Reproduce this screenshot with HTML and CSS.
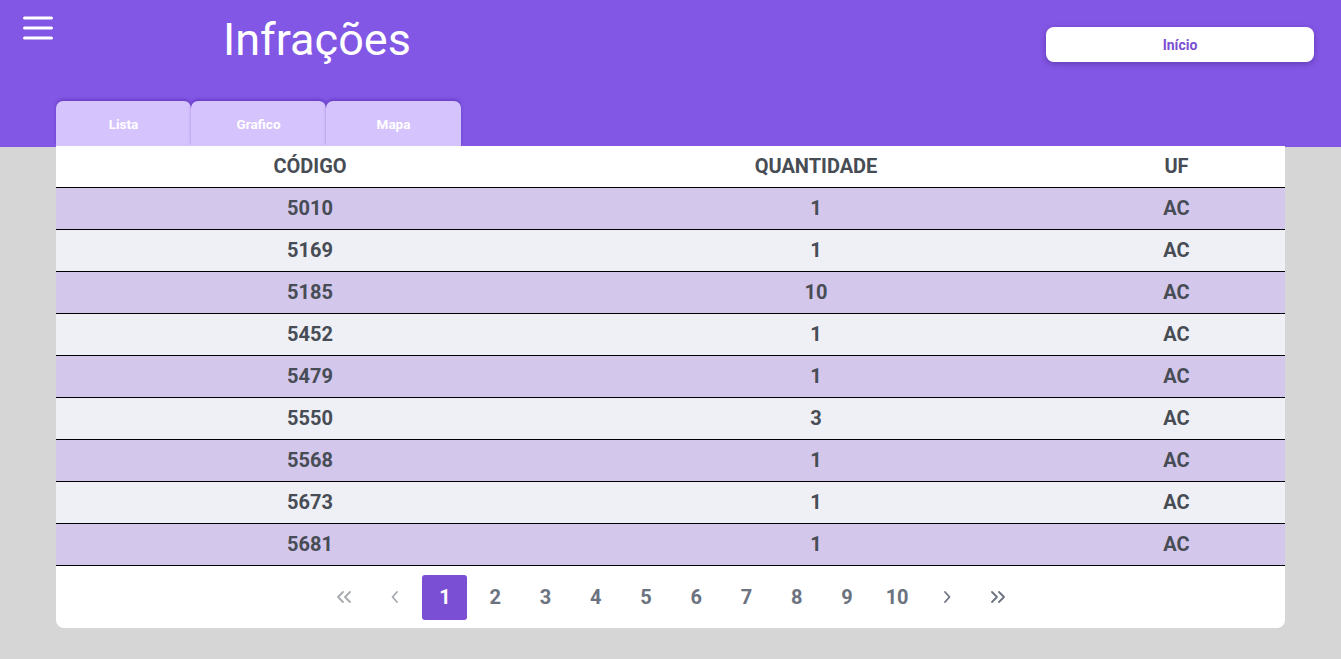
FILE: index.html
```html
<!DOCTYPE html>
<html lang="pt-BR">
<head>
<meta charset="utf-8">
<title>Infrações</title>
<link rel="stylesheet" href="styles.css">
</head>
<body>
<header class="header">
  <div class="topbar">
    <button class="menu" aria-label="menu">
      <svg width="30" height="24" viewBox="0 0 30 24"><g stroke="#fff" stroke-width="3" stroke-linecap="round"><line x1="1.5" y1="2" x2="28.5" y2="2"/><line x1="1.5" y1="12" x2="28.5" y2="12"/><line x1="1.5" y1="22" x2="28.5" y2="22"/></g></svg>
    </button>
    <h1 class="title">Infrações</h1>
    <button class="home">Início</button>
  </div>
  <nav class="tabs">
    <div class="tab">Lista</div>
    <div class="tab">Grafico</div>
    <div class="tab">Mapa</div>
  </nav>
</header>
<main class="main">
  <section class="card">
    <table class="table">
      <colgroup><col class="c1"><col class="c2"><col class="c3"></colgroup>
      <thead><tr><th>CÓDIGO</th><th>QUANTIDADE</th><th>UF</th></tr></thead>
      <tbody>
        <tr><td>5010</td><td>1</td><td>AC</td></tr>
        <tr><td>5169</td><td>1</td><td>AC</td></tr>
        <tr><td>5185</td><td>10</td><td>AC</td></tr>
        <tr><td>5452</td><td>1</td><td>AC</td></tr>
        <tr><td>5479</td><td>1</td><td>AC</td></tr>
        <tr><td>5550</td><td>3</td><td>AC</td></tr>
        <tr><td>5568</td><td>1</td><td>AC</td></tr>
        <tr><td>5673</td><td>1</td><td>AC</td></tr>
        <tr><td>5681</td><td>1</td><td>AC</td></tr>
      </tbody>
    </table>
    <div class="pager">
      <span class="pg disabled"><svg width="18" height="14" viewBox="0 0 18 14"><g fill="none" stroke="currentColor" stroke-width="1.8" stroke-linecap="round" stroke-linejoin="round"><polyline points="8,2 3,7 8,12"/><polyline points="15,2 10,7 15,12"/></g></svg></span>
      <span class="pg disabled"><svg width="10" height="14" viewBox="0 0 10 14"><polyline points="7,2 2.5,7 7,12" fill="none" stroke="currentColor" stroke-width="1.8" stroke-linecap="round" stroke-linejoin="round"/></svg></span>
      <span class="pg active">1</span>
      <span class="pg">2</span>
      <span class="pg">3</span>
      <span class="pg">4</span>
      <span class="pg">5</span>
      <span class="pg">6</span>
      <span class="pg">7</span>
      <span class="pg">8</span>
      <span class="pg">9</span>
      <span class="pg">10</span>
      <span class="pg"><svg width="10" height="14" viewBox="0 0 10 14"><polyline points="3,2 7.5,7 3,12" fill="none" stroke="currentColor" stroke-width="1.8" stroke-linecap="round" stroke-linejoin="round"/></svg></span>
      <span class="pg"><svg width="18" height="14" viewBox="0 0 18 14"><g fill="none" stroke="currentColor" stroke-width="1.8" stroke-linecap="round" stroke-linejoin="round"><polyline points="3,2 8,7 3,12"/><polyline points="10,2 15,7 10,12"/></g></svg></span>
    </div>
  </section>
</main>
</body>
</html>
```
FILE: styles.css
```css
* { box-sizing: border-box; }
html, body { margin: 0; padding: 0; }
body {
  font-family: Roboto, "Liberation Sans", Arial, sans-serif;
  background: #d6d6d6;
  min-height: 659px;
}
.header {
  background: #8257e5;
  height: 147px;
  display: flex;
  flex-direction: column;
  justify-content: space-between;
}
.topbar {
  display: flex;
  align-items: flex-start;
  padding: 0 27px 0 23px;
}
.menu {
  background: none;
  border: 0;
  padding: 0;
  margin-top: 16px;
  width: 30px;
  height: 24px;
  display: block;
  cursor: pointer;
}
.menu svg { display: block; }
.title {
  margin: 13px 0 0 170px;
  font-weight: 400;
  font-size: 45px;
  line-height: 54px;
  color: #fff;
  flex: 1;
}
.home {
  margin-top: 27px;
  width: 268px;
  height: 35px;
  background: #fff;
  border: 0;
  border-radius: 8px;
  box-shadow: 0 2px 6px rgba(40, 10, 90, 0.35);
  color: #7a4fd4;
  font-family: Roboto, "Liberation Sans", Arial, sans-serif;
  font-weight: 700;
  font-size: 14px;
}
.tabs {
  display: flex;
  margin-left: 56px;
  margin-bottom: 1px;
}
.tab {
  width: 135px;
  height: 45px;
  background: #d5c3fd;
  border-radius: 7px 7px 0 0;
  box-shadow: 0 -2px 3px rgba(60, 20, 140, 0.35);
  color: #fff;
  font-weight: 700;
  font-size: 13.5px;
  display: flex;
  align-items: center;
  justify-content: center;
  padding-top: 1px;
}
.main {
  padding: 0 56px 30px 56px;
  margin-top: -1px;
}
.card {
  background: #fff;
  border-radius: 0 0 8px 8px;
  width: 1229px;
  overflow: hidden;
}
.table {
  width: 100%;
  border-collapse: collapse;
  table-layout: fixed;
}
.c1 { width: 508px; }
.c2 { width: 504px; }
.c3 { width: 217px; }
.table th, .table td {
  text-align: center;
  font-weight: 700;
  font-size: 20px;
  color: #474c55;
  height: 42px;
  padding: 0;
  border-bottom: 1px solid #000;
}
.table th { height: 41px; }
.table tbody tr:nth-child(odd) td { background: #d3c7eb; }
.table tbody tr:nth-child(even) td { background: #eff0f6; }
.pager {
  display: flex;
  justify-content: center;
  gap: 5.25px;
  padding: 9px 0 8px 1px;
}
.pg {
  width: 45px;
  height: 45px;
  display: flex;
  align-items: center;
  justify-content: center;
  border-radius: 3px;
  font-weight: 700;
  font-size: 20px;
  color: #6b7280;
}
.pg svg { display: block; }
.pg.disabled { color: #a6a9b0; }
.pg.active { background: #7a4fd4; color: #fff; }
```
